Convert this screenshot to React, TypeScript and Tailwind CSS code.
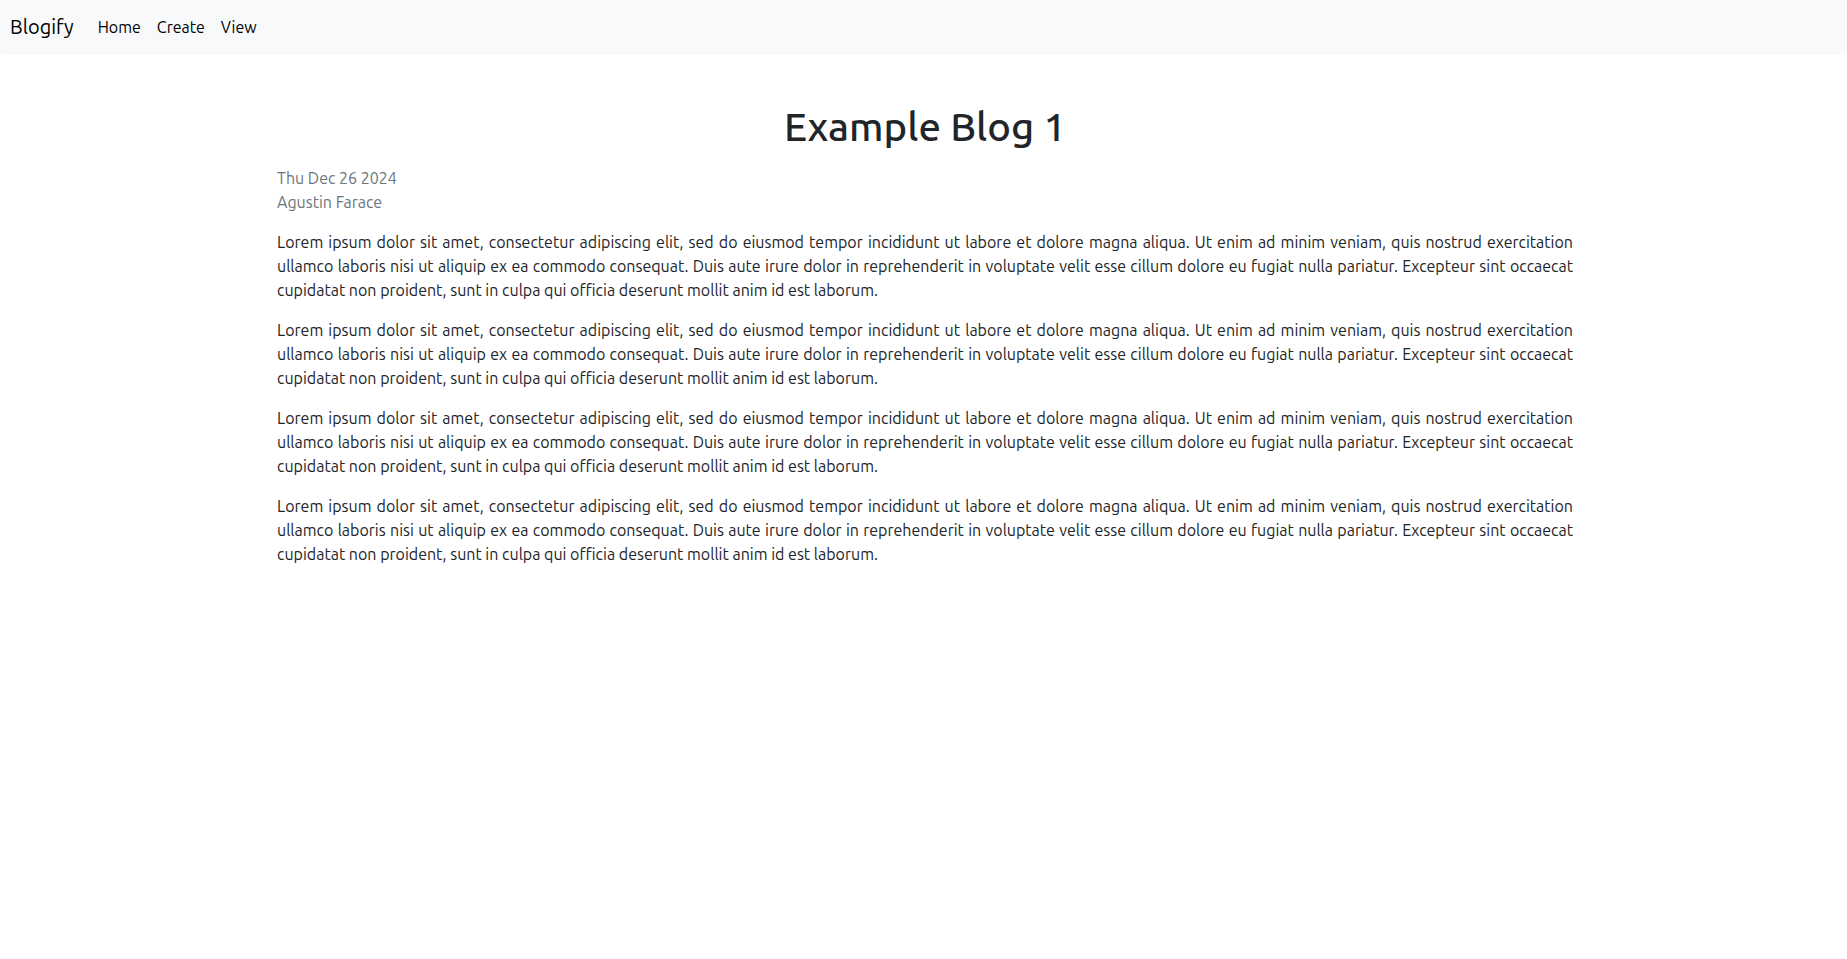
const lorem =
  'Lorem ipsum dolor sit amet, consectetur adipiscing elit, sed do eiusmod tempor incididunt ut labore et dolore magna aliqua. Ut enim ad minim veniam, quis nostrud exercitation ullamco laboris nisi ut aliquip ex ea commodo consequat. Duis aute irure dolor in reprehenderit in voluptate velit esse cillum dolore eu fugiat nulla pariatur. Excepteur sint occaecat cupidatat non proident, sunt in culpa qui officia deserunt mollit anim id est laborum.';

const paragraphs = [lorem, lorem, lorem, lorem];

function Navbar() {
  return (
    <nav className="flex items-center rounded-bl-[3px] bg-[#f8f9fa] px-2.5 pt-[7px] pb-2">
      <a href="#" className="mr-4 py-1 text-xl leading-[30px] text-black">
        Blogify
      </a>
      <ul className="flex">
        {['Home', 'Create', 'View'].map((label) => (
          <li key={label}>
            <a href="#" className="block px-2 py-2 text-black">
              {label}
            </a>
          </li>
        ))}
      </ul>
    </nav>
  );
}

export default function App() {
  return (
    <div className="font-[Ubuntu,'Noto_Sans',sans-serif] text-base text-[#212529]">
      <Navbar />
      <div className="pl-[3px]">
        <main className="mx-auto max-w-[1320px] px-3 pt-12">
          <h1 className="mb-[15px] text-center text-[40px] leading-12 font-medium">Example Blog 1</h1>
          <div className="mb-4 text-[#6c757d]">
            <p>Thu Dec 26 2024</p>
            <p>Agustin Farace</p>
          </div>
          {paragraphs.map((text, index) => (
            <p key={index} className="mb-4 text-justify">
              {text}
            </p>
          ))}
        </main>
      </div>
    </div>
  );
}
